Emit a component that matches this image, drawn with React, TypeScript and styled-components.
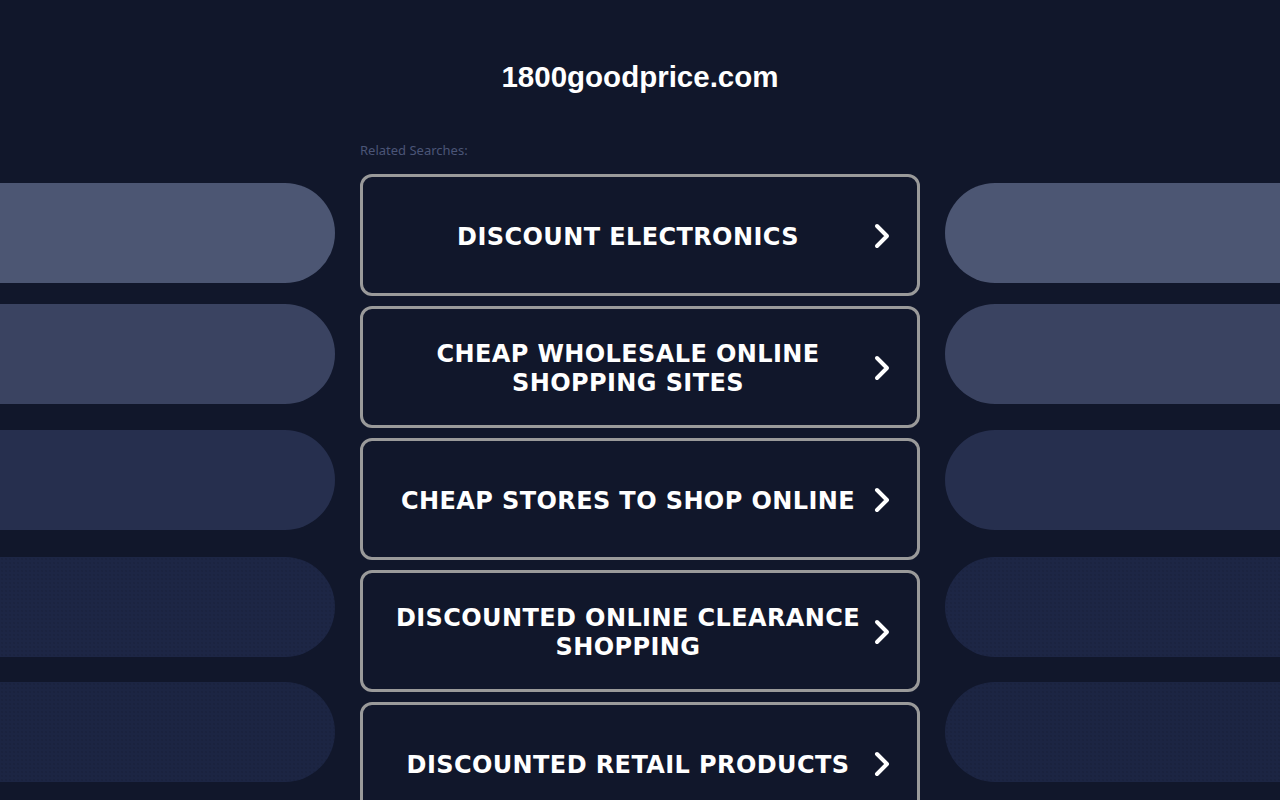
import styled, { createGlobalStyle } from "styled-components";

const GlobalStyle = createGlobalStyle`
  html, body {
    margin: 0;
    padding: 0;
    background: #11172b;
    overflow: hidden;
  }
  * {
    box-sizing: border-box;
  }
`;

const Page = styled.div`
  width: 1280px;
  min-height: 800px;
  background: #11172b;
`;

const Header = styled.header`
  padding-top: 60px;
  text-align: center;
`;

const Title = styled.h1`
  margin: 0;
  font-family: "Liberation Sans", Arial, sans-serif;
  font-size: 29.5px;
  line-height: 34px;
  font-weight: 700;
  color: #ffffff;
`;

const Main = styled.main`
  margin-top: 49px;
  display: grid;
  grid-template-columns: 335px 560px 335px;
  column-gap: 25px;
`;

const SideColumn = styled.div`
  display: flex;
  flex-direction: column;
  padding-top: 40px;
`;

type pillProp = {
  $side: "left" | "right";
  $color: string;
  $top: number;
  $dotted?: boolean;
};

const Pill = styled.div<pillProp>`
  height: 100px;
  margin-top: ${(props) => props.$top}px;
  background-color: ${(props) => props.$color};
  background-image: ${(props) =>
    props.$dotted ? "radial-gradient(rgba(10, 14, 30, 0.18) 0.6px, transparent 0.9px)" : "none"};
  background-size: 4px 4px;
  border-radius: ${(props) => (props.$side === "left" ? "0 50px 50px 0" : "50px 0 0 50px")};
`;

const Center = styled.div`
  display: flex;
  flex-direction: column;
`;

const Label = styled.div`
  font-family: "Noto Sans", "Open Sans", sans-serif;
  font-size: 13px;
  line-height: 15px;
  color: #4b5577;
  margin-bottom: 16px;
`;

const List = styled.div`
  display: flex;
  flex-direction: column;
  gap: 10px;
`;

const LinkButton = styled.a`
  display: flex;
  align-items: center;
  height: 122px;
  padding: 1px 26px 0 20px;
  border: 3px solid #9a9a9a;
  border-radius: 12px;
  background: #11172b;
  text-decoration: none;
  cursor: pointer;
`;

const LinkText = styled.span`
  flex: 1;
  text-align: center;
  padding-top: 3px;
  font-family: "DejaVu Sans", Verdana, sans-serif;
  font-weight: 700;
  font-size: 24px;
  line-height: 29px;
  letter-spacing: 0.4px;
  color: #ffffff;
`;

const Chevron = styled.svg`
  width: 18px;
  height: 26px;
  flex: none;
`;

const pills = [
  { color: "#4c5673", top: 0 },
  { color: "#3a4361", top: 21 },
  { color: "#262f4e", top: 26 },
  { color: "#1d2645", top: 27, dotted: true },
  { color: "#1c2543", top: 25, dotted: true },
];

const searches = [
  "DISCOUNT ELECTRONICS",
  "CHEAP WHOLESALE ONLINE SHOPPING SITES",
  "CHEAP STORES TO SHOP ONLINE",
  "DISCOUNTED ONLINE CLEARANCE SHOPPING",
  "DISCOUNTED RETAIL PRODUCTS",
];

const App = () => {
  return (
    <Page>
      <GlobalStyle />
      <Header>
        <Title>1800goodprice.com</Title>
      </Header>
      <Main>
        <SideColumn>
          {pills.map((p, i) => (
            <Pill key={i} $side="left" $color={p.color} $top={p.top} $dotted={p.dotted} />
          ))}
        </SideColumn>
        <Center>
          <Label>Related Searches:</Label>
          <List>
            {searches.map((s) => (
              <LinkButton key={s}>
                <LinkText>{s}</LinkText>
                <Chevron viewBox="0 0 18 26">
                  <polyline
                    points="4,3 14,13 4,23"
                    fill="none"
                    stroke="#ffffff"
                    strokeWidth="4"
                    strokeLinecap="round"
                    strokeLinejoin="round"
                  />
                </Chevron>
              </LinkButton>
            ))}
          </List>
        </Center>
        <SideColumn>
          {pills.map((p, i) => (
            <Pill key={i} $side="right" $color={p.color} $top={p.top} $dotted={p.dotted} />
          ))}
        </SideColumn>
      </Main>
    </Page>
  );
};

export default App;
